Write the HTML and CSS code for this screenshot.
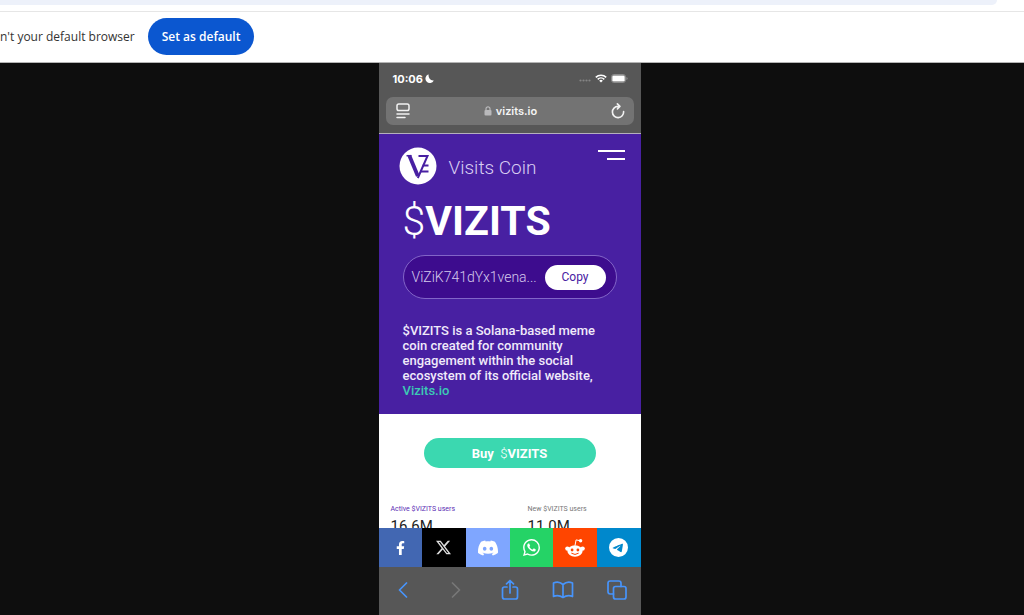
FILE: index.html
```html
<!DOCTYPE html>
<html lang="en">
<head>
<meta charset="utf-8">
<meta name="viewport" content="width=device-width, initial-scale=1">
<title>Visits Coin</title>
<link rel="stylesheet" href="styles.css">
</head>
<body>
<div class="chrome"><div class="omnibox"></div></div>
<div class="banner">
  <span>n't your default browser</span>
  <button class="default-btn" type="button">Set as default</button>
</div>
<main class="stage">
  <div class="phone">
    <header class="top">
      <div class="status">
        <span class="clock">10:06</span>
        <svg class="moon" viewBox="0 0 10 10" width="9" height="9"><path d="M3.800.4A4.900 4.900 0 1 0 9.800 7.200Q4 7.800 3.800.4Z" fill="#fff"/></svg>
        <svg class="signal" viewBox="0 0 12 3" width="12" height="3" fill="#858585"><circle cx="1.5" cy="1.5" r="1.1"/><circle cx="4.5" cy="1.5" r="1.1"/><circle cx="7.5" cy="1.5" r="1.1"/><circle cx="10.5" cy="1.5" r="1.1"/></svg>
        <svg viewBox="0 0 12 9" width="12" height="9" fill="none" stroke="#fff" stroke-width="1.6"><path d="M.8 3.3a7.5 7.5 0 0 1 10.4 0M2.7 5.3a4.8 4.8 0 0 1 6.6 0"/><path d="M4.2 6.7a2.6 2.6 0 0 1 3.6 0L6 8.6Z" fill="#fff" stroke="none"/></svg>
        <svg viewBox="0 0 17 9" width="17" height="9"><rect x=".5" y=".5" width="14" height="8" rx="2.4" fill="none" stroke="#8b8b8b"/><rect x="1.3" y="1.4" width="12.4" height="6.2" rx="1.4" fill="#fff"/><path d="M15.5 3v3q1-.3 1-1.500T15.500 3Z" fill="#999"/></svg>
      </div>
      <div class="urlbar">
        <button class="icon-btn" type="button" aria-label="Page menu"><svg viewBox="0 0 14 16" width="14" height="16" fill="none" stroke="#f2f2f2" stroke-width="1.5" stroke-linecap="round"><rect x="1" y="1" width="12" height="6.500" rx="1.800"/><path d="M1 11h12M1 14.600h8"/></svg></button>
        <span class="url"><svg viewBox="0 0 8 10" width="8" height="10"><rect x=".5" y="4" width="7" height="5.600" rx="1" fill="#b9b9bb"/><path d="M2 4.500V2.800a2 2 0 0 1 4 0v1.700" fill="none" stroke="#b9b9bb" stroke-width="1.200"/></svg>vizits.io</span>
        <button class="icon-btn" type="button" aria-label="Reload"><svg viewBox="0 0 14 16" width="14" height="16" fill="none" stroke="#f2f2f2" stroke-width="1.600" stroke-linecap="round" stroke-linejoin="round"><path d="M12.600 8.600A5.600 5.600 0 1 1 7 3.400h1.500M6.400.9l2.500 2.500-2.500 2.600"/></svg></button>
      </div>
    </header>
    <div class="page">
      <section class="hero">
        <div class="brand">
          <svg class="logo" viewBox="0 0 38 38" width="38" height="38"><circle cx="19" cy="19" r="18.500" fill="#fff"/><g fill="none" stroke="#4820a2"><path d="M7.500 8.700h5" stroke-width="1.500"/><path d="M10.300 8.500l8.500 20.500" stroke-width="3.800"/><path d="M18.800 31 28.500 8.900h-9" stroke-width="2"/><path d="M23.700 18.500h5.800M21.500 24.500h8" stroke-width="1.900"/></g></svg>
          <span class="name">Visits Coin</span>
          <button class="menu" type="button" aria-label="Menu"><svg viewBox="0 0 27 12" width="27" height="12" stroke="#fff" stroke-width="2"><path d="M0 2h27M9 10h18"/></svg></button>
        </div>
        <h1 class="title"><span class="thin">$</span>VIZITS</h1>
        <div class="address">
          <span class="key">ViZiK741dYx1vena...</span>
          <button class="copy" type="button">Copy</button>
        </div>
        <p class="about">$VIZITS is a Solana-based meme coin created for community engagement within the social ecosystem of its official website, <a href="#site">Vizits.io</a></p>
      </section>
      <section class="market">
        <button class="buy" type="button">Buy&nbsp; <span class="thin">$</span>VIZITS</button>
        <div class="stats">
          <div class="stat active"><span>Active $VIZITS users</span><strong>16.6M</strong></div>
          <div class="stat"><span>New $VIZITS users</span><strong>11.0M</strong></div>
        </div>
      </section>
    </div>
    <nav class="social" aria-label="Share">
      <a class="facebook" href="#facebook" aria-label="Facebook"><svg viewBox="0 0 320 512" width="9" height="14" fill="#fff"><path d="M279.140 288l14.220-92.660h-88.910v-60.130c0-25.350 12.420-50.060 52.240-50.060h40.420V6.260S260.430 0 225.360 0c-73.220 0-121.080 44.380-121.080 124.720v70.620H22.890V288h81.390v224h100.170V288z"/></svg></a>
      <a class="x" href="#x" aria-label="X"><svg viewBox="0 0 24 24" width="15" height="15" fill="#ddd"><path d="M18.901 1.153h3.680l-8.040 9.190L24 22.846h-7.406l-5.800-7.584-6.638 7.584H.474l8.600-9.830L0 1.154h7.594l5.243 6.932ZM17.610 20.644h2.039L6.486 3.240H4.298Z"/></svg></a>
      <a class="discord" href="#discord" aria-label="Discord"><svg viewBox="0 0 24 24" width="20" height="20" fill="#fff"><path d="M20.317 4.3698a19.7913 19.7913 0 00-4.8851-1.5152.0741.0741 0 00-.0785.0371c-.211.3753-.4447.8648-.6083 1.2495-1.8447-.2762-3.68-.2762-5.4868 0-.1636-.3933-.4058-.8742-.6177-1.2495a.077.077 0 00-.0785-.037 19.7363 19.7363 0 00-4.8852 1.515.0699.0699 0 00-.0321.0277C.5334 9.0458-.319 13.5799.0992 18.0578a.0824.0824 0 00.0312.0561c2.0528 1.5076 4.0413 2.4228 5.9929 3.0294a.0777.0777 0 00.0842-.0276c.4616-.6304.8731-1.2952 1.226-1.9942a.076.076 0 00-.0416-.1057c-.6528-.2476-1.2743-.5495-1.8722-.8923a.077.077 0 01-.0076-.1277c.1258-.0943.2517-.1923.3718-.2914a.0743.0743 0 01.0776-.0105c3.9278 1.7933 8.18 1.7933 12.0614 0a.0739.0739 0 01.0785.0095c.1202.099.246.1981.3728.2924a.077.077 0 01-.0066.1276 12.2986 12.2986 0 01-1.873.8914.0766.0766 0 00-.0407.1067c.3604.698.7719 1.3628 1.225 1.9932a.076.076 0 00.0842.0286c1.961-.6067 3.9495-1.5219 6.0023-3.0294a.077.077 0 00.0313-.0552c.5004-5.177-.8382-9.6739-3.5485-13.6604a.061.061 0 00-.0312-.0286zM8.02 15.3312c-1.1825 0-2.1569-1.0857-2.1569-2.419 0-1.3332.9555-2.4189 2.157-2.4189 1.2108 0 2.1757 1.0952 2.1568 2.419 0 1.3332-.9555 2.4189-2.1569 2.4189zm7.9748 0c-1.1825 0-2.1569-1.0857-2.1569-2.419 0-1.3332.9554-2.4189 2.1569-2.4189 1.2108 0 2.1757 1.0952 2.1568 2.419 0 1.3332-.946 2.4189-2.1568 2.4189Z"/></svg></a>
      <a class="whatsapp" href="#whatsapp" aria-label="WhatsApp"><svg viewBox="0 0 24 24" width="17" height="17" fill="#fff"><path d="M17.472 14.382c-.297-.149-1.758-.867-2.030-.967-.273-.099-.471-.148-.670.150-.197.297-.767.966-.940 1.164-.173.199-.347.223-.644.075-.297-.150-1.255-.463-2.390-1.475-.883-.788-1.480-1.761-1.653-2.059-.173-.297-.018-.458.130-.606.134-.133.298-.347.446-.520.149-.174.198-.298.298-.497.099-.198.050-.371-.025-.520-.075-.149-.669-1.612-.916-2.207-.242-.579-.487-.500-.669-.510-.173-.008-.371-.010-.570-.010-.198 0-.520.074-.792.372-.272.297-1.040 1.016-1.040 2.479 0 1.462 1.065 2.875 1.213 3.074.149.198 2.096 3.200 5.077 4.487.709.306 1.262.489 1.694.625.712.227 1.360.195 1.871.118.571-.085 1.758-.719 2.006-1.413.248-.694.248-1.289.173-1.413-.074-.124-.272-.198-.570-.347m-5.421 7.403h-.004a9.870 9.870 0 0 1-5.031-1.378l-.361-.214-3.741.982.998-3.648-.235-.374a9.860 9.860 0 0 1-1.510-5.260c.001-5.450 4.436-9.884 9.888-9.884 2.640 0 5.122 1.030 6.988 2.898a9.825 9.825 0 0 1 2.893 6.994c-.003 5.450-4.437 9.884-9.885 9.884m8.413-18.297A11.815 11.815 0 0 0 12.050 0C5.495 0 .160 5.335.157 11.892c0 2.096.547 4.142 1.588 5.945L.057 24l6.305-1.654a11.882 11.882 0 0 0 5.683 1.448h.005c6.554 0 11.890-5.335 11.893-11.893a11.821 11.821 0 0 0-3.480-8.413Z"/></svg></a>
      <a class="reddit" href="#reddit" aria-label="Reddit"><svg viewBox="0 0 20 20" width="20" height="20"><g fill="#fff"><ellipse cx="10" cy="13" rx="7.600" ry="5.800"/><circle cx="2.400" cy="10.600" r="2.200"/><circle cx="17.600" cy="10.600" r="2.200"/><circle cx="15.600" cy="2.700" r="1.700"/></g><path d="m10 7.500 1.100-5.600 3.800.8" fill="none" stroke="#fff"/><circle cx="7.100" cy="12" r="1.400" fill="#ff4500"/><circle cx="12.900" cy="12" r="1.400" fill="#ff4500"/><path d="M6.700 15.400q3.300 2.300 6.600 0" fill="none" stroke="#ff4500" stroke-linecap="round"/></svg></a>
      <a class="telegram" href="#telegram" aria-label="Telegram"><svg viewBox="0 0 16 16" width="19" height="19" fill="#fff"><path fill-rule="evenodd" d="M16 8A8 8 0 1 1 0 8a8 8 0 0 1 16 0zM8.287 5.906c-.778.324-2.334.994-4.666 2.010-.378.150-.577.298-.595.442-.030.243.275.339.690.470l.175.055c.408.133.958.288 1.243.294.260.006.549-.100.868-.320 2.179-1.471 3.304-2.214 3.374-2.230.050-.012.120-.026.166.016.047.041.042.120.037.141-.030.129-1.227 1.241-1.846 1.817-.193.180-.330.307-.358.336a8.154 8.154 0 0 1-.188.186c-.380.366-.664.640.015 1.088.327.216.589.393.850.571.284.194.568.387.936.629.093.060.183.125.270.187.331.236.630.448.997.414.214-.020.435-.220.547-.820.265-1.417.786-4.486.906-5.751a1.426 1.426 0 0 0-.013-.315.337.337 0 0 0-.114-.217.526.526 0 0 0-.310-.093c-.300.005-.763.166-2.984 1.090z"/></svg></a>
    </nav>
    <footer class="toolbar">
      <button type="button" aria-label="Back"><svg viewBox="0 0 10 16" width="10" height="16"><path d="M8.500 1 1.500 8l7 7"/></svg></button>
      <button class="off" type="button" aria-label="Forward"><svg viewBox="0 0 10 16" width="10" height="16"><path d="m1.500 1 7 7-7 7"/></svg></button>
      <button type="button" aria-label="Share page"><svg viewBox="0 0 18 22" width="18" height="22"><path d="M6 8H3.500Q1.500 8 1.500 10v8q0 2 2 2h11q2 0 2-2v-8q0-2-2-2H12M9 14V1.500M5.500 4.800 9 1.500l3.500 3.300"/></svg></button>
      <button type="button" aria-label="Bookmarks"><svg viewBox="0 0 22 18" width="22" height="18"><path d="M11 3.500Q6.500-.5 1.500 2v13.500q5-2 9.500 1 4.500-3 9.500-1V2Q15.500-.5 11 3.500v13"/></svg></button>
      <button type="button" aria-label="Tabs"><svg viewBox="0 0 20 20" width="20" height="20"><rect x="6.500" y="6.500" width="12.500" height="12.500" rx="2"/><path d="M6.500 14H3.200Q1 14 1 11.800V3.200Q1 1 3.200 1h8.600Q14 1 14 3.200v3.300"/></svg></button>
    </footer>
  </div>
</main>
</body>
</html>
```
FILE: styles.css
```css
* { box-sizing: border-box; }
body {
  margin: 0;
  height: 100vh;
  display: flex;
  flex-direction: column;
  overflow: hidden;
  background: #fff;
  font-family: Roboto, sans-serif;
}
button {
  border: 0;
  padding: 0;
  background: none;
  font-family: inherit;
  cursor: pointer;
}
svg { display: block; flex: none; }

.chrome {
  height: 12px;
  flex: none;
  padding-right: 27px;
  border-bottom: 1px solid #e6e6e6;
}
.omnibox {
  height: 5px;
  border-radius: 0 0 12px 0;
  background: #edf1fa;
}
.banner {
  display: flex;
  align-items: center;
  gap: 13px;
  height: 51px;
  flex: none;
  padding-bottom: 1px;
  border-bottom: 1px solid #b4b4b4;
  font: 12px "Open Sans", "Noto Sans", sans-serif;
  color: #333;
  white-space: nowrap;
}
.default-btn {
  height: 37px;
  padding: 0 14px;
  border-radius: 19px;
  background: #0b57d0;
  color: #fff;
  font-size: 12px;
  font-weight: 600;
}
.stage {
  flex: 1;
  min-height: 0;
  display: flex;
  justify-content: center;
  padding-right: 5px;
  background: #0e0e0e;
}
.phone {
  width: 100%;
  max-width: 262px;
  display: flex;
  flex-direction: column;
  background: #fff;
}

.top {
  flex: none;
  padding: 8px 7px;
  border-bottom: 1px solid #b5b0bd;
  background: #575757;
}
.status {
  display: flex;
  align-items: center;
  gap: 4px;
  height: 15px;
  padding: 0 6px 0 7px;
}
.clock {
  font: 700 11px Inter, sans-serif;
  color: #fff;
}
.moon { margin-left: -2px; }
.signal { margin: 4px 0 0 auto; }
.urlbar {
  display: flex;
  align-items: center;
  justify-content: space-between;
  height: 28px;
  margin-top: 11px;
  padding: 0 8px 0 10px;
  border-radius: 7px;
  background: #737373;
}
.url {
  display: flex;
  align-items: center;
  gap: 4px;
  font: 600 11px Inter, sans-serif;
  color: #f4f4f4;
}

.page {
  flex: 1;
  min-height: 0;
  overflow: hidden;
}
.hero {
  padding: 13px 24px 16px;
  background: #4820a2;
  color: #fff;
}
.brand {
  display: flex;
  align-items: center;
  gap: 12px;
  margin: 0 -8px 0 -4px;
}
.name {
  font-size: 19px;
  font-weight: 300;
  line-height: 24px;
  padding-top: 3px;
  color: #d9cdf2;
}
.menu {
  margin-left: auto;
  padding-top: 2px;
  align-self: flex-start;
}
.title {
  margin: 12px 0 10px;
  font-size: 41px;
  line-height: 48px;
  font-weight: 700;
}
.thin { font-weight: 300; }
.address {
  display: flex;
  align-items: center;
  justify-content: space-between;
  height: 44px;
  padding: 0 10px 0 8px;
  border: 1px solid #8265c8;
  border-radius: 22px;
  background: #3d0c8e;
}
.key {
  font-size: 14px;
  font-weight: 300;
  color: #d5c9ec;
}
.copy {
  width: 61px;
  height: 25px;
  border-radius: 13px;
  background: #fff;
  color: #4820a2;
  font-size: 12px;
  font-weight: 400;
}
.about {
  margin: 24px 0 0;
  font-size: 13px;
  line-height: 15px;
  font-weight: 500;
  color: #f0eafa;
}
.about a { color: #3cc8b4; text-decoration: none; }

.market { padding: 24px 12px 0; }
.buy {
  display: block;
  width: 172px;
  height: 30px;
  margin: 0 auto;
  border-radius: 15px;
  background: #3bd8b0;
  color: #fff;
  font-size: 13px;
  font-weight: 700;
}
.stats {
  display: grid;
  grid-template-columns: 1fr 1fr;
  gap: 36px;
  margin-top: 36px;
}
.stat span {
  display: block;
  font-size: 7px;
  line-height: 10px;
  color: #777;
}
.stat.active span { color: #5a2db4; }
.stat strong {
  display: block;
  margin-top: 3px;
  font-size: 15px;
  line-height: 18px;
  font-weight: 400;
  color: #222;
}

.social {
  flex: none;
  display: grid;
  grid-template-columns: repeat(6, 1fr);
  height: 39px;
}
.social a {
  display: flex;
  align-items: center;
  justify-content: center;
}
.facebook { background: #4267b2; }
.x { background: #000; }
.discord { background: #7fa6ff; }
.whatsapp { background: #25d366; }
.reddit { background: #ff4500; }
.telegram { background: #0088cc; }

.toolbar {
  flex: none;
  display: flex;
  align-items: flex-start;
  justify-content: space-between;
  height: 48px;
  padding: 11px 12px 0;
  background: #575757;
}
.toolbar button {
  display: flex;
  align-items: center;
  justify-content: center;
  width: 24px;
  height: 23px;
}
.toolbar svg {
  fill: none;
  stroke: #4794fb;
  stroke-width: 1.7px;
  stroke-linecap: round;
  stroke-linejoin: round;
}
.toolbar .off svg { stroke: #777; }
```
